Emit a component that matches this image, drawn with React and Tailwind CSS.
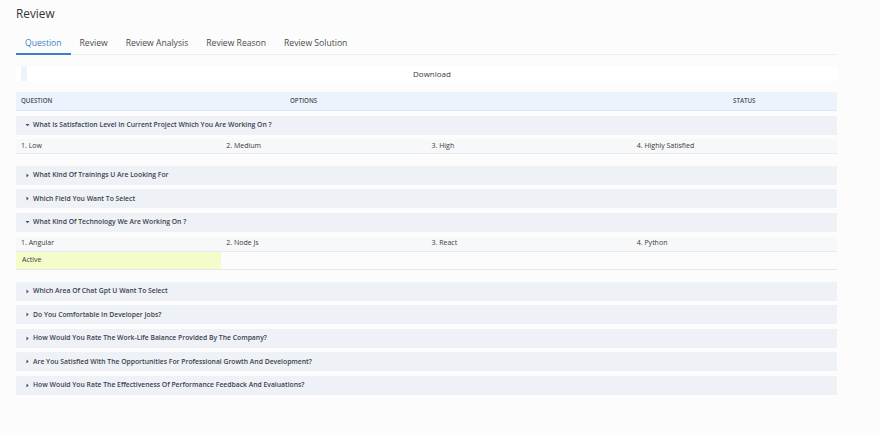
import React from 'react';

const tabs = ['Question', 'Review', 'Review Analysis', 'Review Reason', 'Review Solution'];

const questions = [
  {
    title: 'What Is Satisfaction Level In Current Project Which You Are Working On ?',
    open: true,
    options: ['1. Low', '2. Medium', '3. High', '4. Highly Satisfied'],
  },
  { title: 'What Kind Of Trainings U Are Looking For' },
  { title: 'Which Field You Want To Select' },
  {
    title: 'What Kind Of Technology We Are Working On ?',
    open: true,
    options: ['1. Angular', '2. Node Js', '3. React', '4. Python'],
    status: 'Active',
  },
  { title: 'Which Area Of Chat Gpt U Want To Select' },
  { title: 'Do You Comfortable In Developer Jobs?' },
  { title: 'How Would You Rate The Work-Life Balance Provided By The Company?' },
  { title: 'Are You Satisfied With The Opportunities For Professional Growth And Development?' },
  { title: 'How Would You Rate The Effectiveness Of Performance Feedback And Evaluations?' },
];

const Caret = ({ open }) =>
  open ? (
    <svg width="5" height="4" viewBox="0 0 5 4" className="shrink-0">
      <path d="M0.5 1 L4.5 1 L2.5 3.2 Z" fill="#4b4f5c" />
    </svg>
  ) : (
    <svg width="5" height="5" viewBox="0 0 5 5" className="shrink-0">
      <path d="M1.5 0.5 L3.7 2.5 L1.5 4.5 Z" fill="#4b4f5c" />
    </svg>
  );

const QuestionItem = ({ q }) => (
  <div className="flex flex-col">
    <div className="flex h-[19px] items-center gap-[3px] bg-[#eef2f7] pl-[9px] text-[6.8px] font-semibold text-[#3b3f4c]">
      <Caret open={q.open} />
      <span>{q.title}</span>
    </div>
    {q.open && (
      <div className="flex flex-col pt-[4.7px] pb-[7.2px]">
        <div className="grid h-[15px] grid-cols-4 items-center border-b border-[#e6e9f0] bg-[#f7f8f9] text-[7px] text-[#3a3a3a]">
          {q.options.map((o) => (
            <div key={o} className="pl-[5px]">
              {o}
            </div>
          ))}
        </div>
        {q.status && (
          <div className="grid h-[18.6px] grid-cols-4 border-b border-[#e6e9f0]">
            <div className="flex items-center bg-[#f4fcc9] pl-[6px] text-[7px] text-[#3a3a3a]">
              {q.status}
            </div>
          </div>
        )}
      </div>
    )}
  </div>
);

export default function App() {
  return (
    <div
      className="min-h-screen bg-[#fcfcfc] px-4 pt-[5px]"
      style={{ fontFamily: '"Open Sans", "Noto Sans", sans-serif' }}
    >
      <div className="w-[821px]">
        <h1 className="h-[16px] text-[11.8px] font-medium leading-[16px] text-[#333]">Review</h1>

        {/* Tabs */}
        <div className="mt-[12px] flex h-[22px] border-b border-[#eeeeee]">
          {tabs.map((t, i) => (
            <div
              key={t}
              className={`-mb-px flex items-center px-[9px] text-[8.6px] ${
                i === 0
                  ? 'border-b-2 border-[#3d7fc8] text-[#3d7fc8]'
                  : 'border-b-2 border-transparent text-[#4a4a4a]'
              }`}
            >
              {t}
            </div>
          ))}
        </div>

        {/* Download bar */}
        <div className="mt-[11px] flex h-[15px] items-stretch bg-white pl-[5px]">
          <div className="w-[6px] bg-[#eef4fc]" />
          <div className="flex flex-1 items-center justify-center text-[8px] text-[#3a3a3a]">
            Download
          </div>
        </div>

        {/* Table header */}
        <div className="mt-[11px] grid h-[19px] grid-cols-[274px_443px_1fr] items-center border-b border-[#dce6f5] bg-[#ebf3fd] text-[6.2px] font-semibold uppercase text-[#4b4f5c]">
          <div className="pl-[5px]">Question</div>
          <div>Options</div>
          <div>Status</div>
        </div>

        {/* Questions */}
        <div className="mt-[4.5px] flex flex-col gap-[4.5px]">
          {questions.map((q) => (
            <QuestionItem key={q.title} q={q} />
          ))}
        </div>
      </div>
    </div>
  );
}
